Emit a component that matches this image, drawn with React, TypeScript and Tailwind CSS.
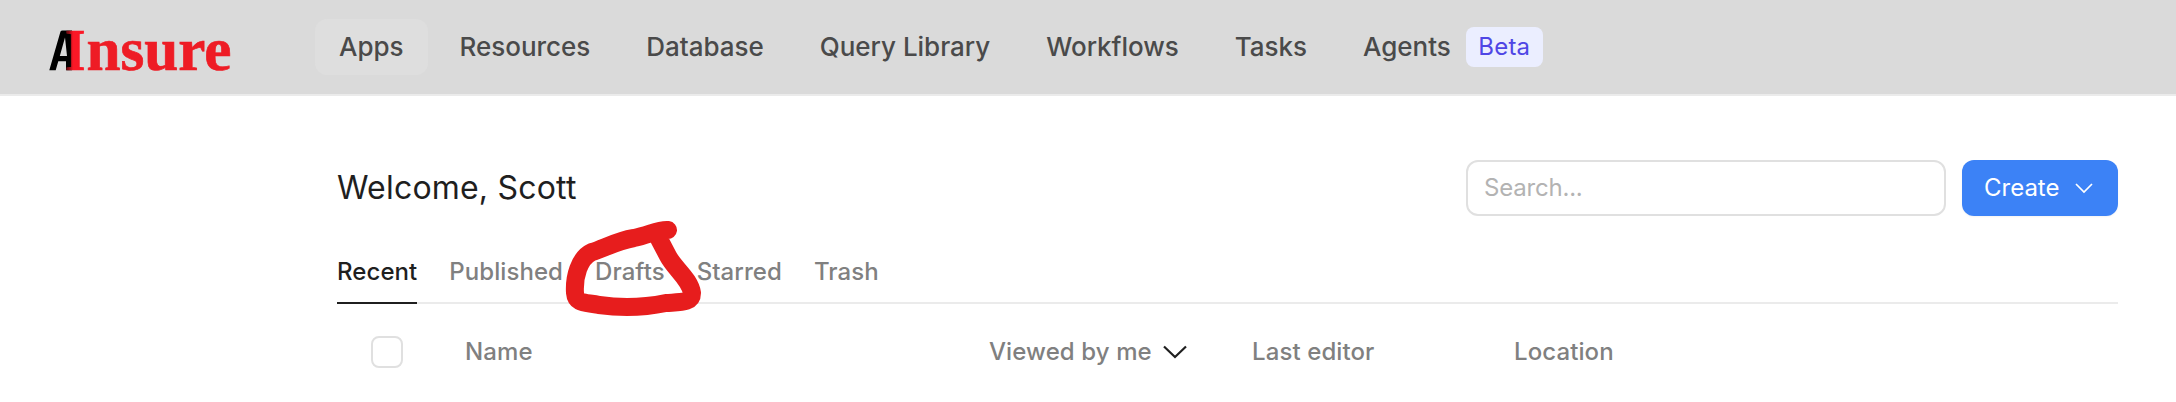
const navItems = ["Resources", "Database", "Query Library", "Workflows", "Tasks"];
const tabs = ["Published", "Drafts", "Starred", "Trash"];

function Logo() {
  return (
    <svg width="200" height="80" viewBox="0 -8 200 80" className="shrink-0" aria-label="AInsure">
      <defs>
        <linearGradient id="fade" gradientUnits="userSpaceOnUse" x1="25" x2="45" y1="0" y2="0">
          <stop offset="0.15" stopColor="#7a0c12" />
          <stop offset="0.4" stopColor="#fb1826" />
          <stop offset="1" stopColor="#fb1826" />
        </linearGradient>
      </defs>
      <path d="M9.300 51.300 L20.500 12.500 Q21 11.500 22.500 11.500 H32 V51.300 H26 V42.300 H18.300 L15.700 51.300 Z M19.800 37 H27 L25 18.500 Z" fill="#000" fillRule="evenodd" />
      <g fontFamily="Liberation Serif, serif" fontWeight="700" fill="#ee1c25" stroke="#ee1c25" strokeWidth="0.7">
        <text x="25" y="51.300" fontSize="59" textLength="20.500" lengthAdjust="spacingAndGlyphs" fill="url(#fade)" stroke="url(#fade)">I</text>
        <text x="46.500" y="51.300" fontSize="61" textLength="145" lengthAdjust="spacingAndGlyphs">nsure</text>
      </g>
    </svg>
  );
}

export default function App() {
  return (
    <div className="h-[402px] w-[2176px] overflow-hidden bg-white font-['Inter',sans-serif] text-[24px] leading-8 text-[#808080]">
      <header className="flex h-24 items-start border-b-2 border-[#ebebeb] bg-[#dadada] pl-10 pt-[11px]">
        <Logo />
        <nav className="ml-[75px] mt-2 flex h-14 items-center gap-2 text-[26px] font-medium tracking-[-0.02px] text-[#4a4a4a]">
          <a className="flex h-14 items-center rounded-xl bg-[#dedede] px-6">Apps</a>
          {navItems.map((item) => (
            <a key={item} className="px-6">{item}</a>
          ))}
          <a className="flex items-center gap-[15px] pl-6">
            Agents
            <span className="flex h-10 items-center rounded-lg bg-[#ebeeff] px-[12.500px] text-[24px] font-normal tracking-[0.2px] text-[#4f46e5]">Beta</span>
          </a>
        </nav>
      </header>
      <main className="ml-[337px] w-[1781px] pt-16">
        <div className="flex h-14 items-center">
          <h1 className="flex-1 text-[32px] leading-10 tracking-[0.2px] text-[#1f1f1f]">Welcome, Scott</h1>
          <div className="flex h-14 w-[480px] items-center rounded-xl border-2 border-[#e0e0e0] pl-4 tracking-[-0.2px] text-[#b3b3b3]">Search...</div>
          <button className="ml-4 flex h-14 w-[156px] items-center rounded-xl bg-[#3c82f6] pl-[22px] text-white shadow-xs">
            Create
            <svg width="18" height="12" viewBox="0 0 18 12" className="ml-4" fill="none" stroke="currentColor" strokeWidth="1.7">
              <path d="M1 2 9 10 17 2" />
            </svg>
          </button>
        </div>
        <div className="relative mt-8 flex h-14 gap-8 border-b-2 border-[#ebebeb] font-medium tracking-[0.07px]">
          <a className="h-14 border-b-2 border-[#1f1f1f] pt-2 text-[#1f1f1f]">Recent</a>
          {tabs.map((tab) => (
            <a key={tab} className="pt-2">{tab}</a>
          ))}
          <svg className="absolute left-[223px] -top-[38px]" width="150" height="120" viewBox="0 0 150 120" fill="none" stroke="#e71d1d" strokeWidth="18" strokeLinejoin="round" strokeLinecap="round">
            <path d="M108 20 C99 19 89 25 74 28 C56 31 43 39 32 42 C19 48 14 67 15 83 C16 95 27 92 39 95 C60 98 82 98 106 93 C121 92 132 93 132 83 C130 69 114 58 108 46 L97 25" />
          </svg>
        </div>
        <div className="flex h-24 items-start pt-8 font-medium tracking-[0.1px]">
          <span className="ml-[34px] h-8 w-8 rounded-lg border-2 border-[#e0e0e0]" />
          <span className="ml-[62px] w-[524px]">Name</span>
          <span className="flex w-[263px] items-center">
            Viewed by me
            <svg width="24" height="14" viewBox="0 0 24 14" className="ml-[11px]" fill="none" stroke="#1f1f1f" strokeWidth="2.200">
              <path d="M1 1.500 12 12 23 1.500" />
            </svg>
          </span>
          <span className="w-[262px]">Last editor</span>
          <span>Location</span>
        </div>
      </main>
    </div>
  );
}
